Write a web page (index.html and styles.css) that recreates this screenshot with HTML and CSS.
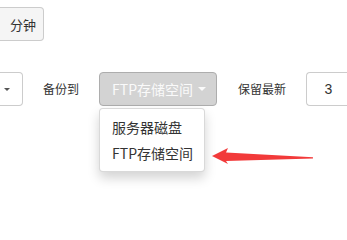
FILE: index.html
```html
<!DOCTYPE html>
<html lang="zh-CN">
<head>
<meta charset="utf-8">
<title>备份设置</title>
<link rel="stylesheet" href="styles.css">
</head>
<body>
<div class="page">
  <div class="row row-top">
    <span class="addon">分钟</span>
  </div>
  <div class="row row-main">
    <span class="select-tail"><span class="caret caret-sm"></span></span>
    <span class="label">备份到</span>
    <div class="dropdown">
      <button class="btn-drop" type="button">FTP存储空间<span class="caret"></span></button>
      <ul class="menu">
        <li class="menu-item">服务器磁盘</li>
        <li class="menu-item">FTP存储空间</li>
      </ul>
    </div>
    <span class="label label-keep">保留最新</span>
    <span class="num-input">3</span>
  </div>
  <svg class="pointer" width="120" height="30" viewBox="200 140 120 30" aria-hidden="true">
    <polygon points="212,156 228,148 226,152.5 313,157.2 313,158.4 226,161 228,164" fill="#f23a3a"/>
  </svg>
</div>
</body>
</html>
```
FILE: styles.css
```css
* { box-sizing: border-box; }
html, body { margin: 0; padding: 0; background: #fff; }
body {
  font-family: "Noto Sans CJK SC", "Noto Sans", sans-serif;
  color: #333;
  width: 347px;
  height: 218px;
  overflow: hidden;
}
.page { position: relative; width: 347px; height: 218px; }
.row { display: flex; align-items: center; }
.row > * { flex: none; white-space: nowrap; }
.row-top { padding-top: 7px; }
.addon {
  display: flex;
  align-items: center;
  justify-content: flex-end;
  width: 44px;
  height: 34px;
  padding-right: 7px;
  font-size: 13px;
  background: #f5f5f5;
  border: 1px solid #ccc;
  border-left: none;
  border-radius: 0 4px 4px 0;
}
.row-main { margin-top: 31px; height: 34px; }
.select-tail {
  display: flex;
  align-items: center;
  width: 23px;
  height: 34px;
  padding-left: 4px;
  background: #fff;
  border: 1px solid #ccc;
  border-left: none;
  border-radius: 0 4px 4px 0;
}
.caret {
  display: inline-block;
  width: 0;
  height: 0;
  margin-left: 5px;
  border-top: 4px solid;
  border-left: 4px solid transparent;
  border-right: 4px solid transparent;
  vertical-align: middle;
}
.caret-sm {
  margin-left: 0;
  color: #555;
  border-top-width: 3px;
  border-left-width: 3px;
  border-right-width: 3px;
}
.label {
  font-size: 12px;
  margin: 0 20px;
  line-height: 34px;
}
.label-keep { margin: 0 20px 0 21px; }
.dropdown { position: relative; }
.btn-drop {
  display: flex;
  align-items: center;
  height: 34px;
  padding: 0 10px 0 12px;
  font-family: inherit;
  font-size: 14px;
  white-space: nowrap;
  color: #fafafa;
  background: #d3d3d3;
  border: 1px solid #adadad;
  border-radius: 4px;
}
.menu {
  position: absolute;
  top: 36px;
  left: 0;
  width: 106px;
  margin: 0;
  padding: 5px 0;
  list-style: none;
  background: #fff;
  border: 1px solid rgba(0,0,0,.15);
  border-radius: 4px;
  box-shadow: 0 6px 12px rgba(0,0,0,.175);
  z-index: 2;
}
.menu-item {
  padding: 0 12px;
  height: 26px;
  line-height: 26px;
  font-size: 14px;
  color: #333;
  white-space: nowrap;
}
.num-input {
  display: flex;
  align-items: center;
  justify-content: center;
  width: 44px;
  height: 34px;
  font-size: 14px;
  font-family: "Liberation Sans", sans-serif;
  color: #333;
  background: #fff;
  border: 1px solid #ccc;
  border-right: none;
  border-radius: 4px 0 0 4px;
}
.pointer {
  position: absolute;
  left: 200px;
  top: 140px;
  z-index: 3;
}
```
